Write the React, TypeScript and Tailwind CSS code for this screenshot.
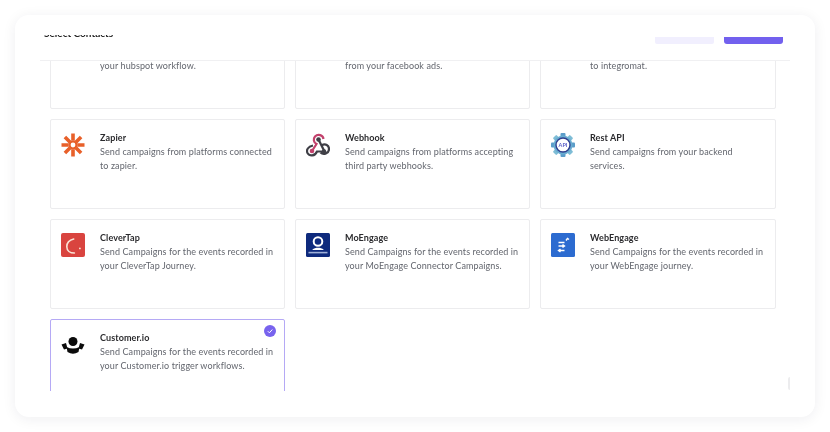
import React from 'react';

const ZapierIcon = () => (
  <svg viewBox="0 0 24 24" className="w-6 h-6" fill="none">
    <g stroke="#e8602a" strokeWidth="3.6">
      <path d="M12 .5v7M12 16.500v7M.5 12h7M16.500 12h7M3.900 3.900l5 5M15.100 15.100l5 5M20.100 3.900l-5 5M8.900 15.100l-5 5" />
    </g>
    <circle cx="12" cy="12" r="3.600" stroke="#e8602a" strokeWidth="2.400" />
  </svg>
);

const WebhookIcon = () => (
  <svg viewBox="0 0 24 24" className="w-6 h-6" fill="none" strokeWidth="2.200">
    <path d="M12.500 6.500l5.500 11" stroke="#3f3f46" />
    <path d="M6 18l4.500-7C7.500 9.500 7 6 9 3.500c3-3 8-1.500 8.500 2.500" stroke="#c2416c" />
    <path d="M7 12.500C2 13.500 0 17 1.500 20c2 3.500 7.500 3.500 9.500-1.500h7" stroke="#3f3f46" />
    <path d="M15.500 12.500c4-2.500 7.500 0 7.500 3.500 0 4.500-5.500 6.500-8.500 3.500" stroke="#3f3f46" />
    <circle cx="12.500" cy="6.500" r="2.300" fill="#3f3f46" />
    <circle cx="6" cy="18" r="2.300" fill="#c2416c" />
    <circle cx="18" cy="18.500" r="2.300" fill="#3f3f46" />
  </svg>
);

const RestApiIcon = () => (
  <svg viewBox="0 0 24 24" className="w-6 h-6">
    <g fill="#5b9dc9">
      <rect x="9.500" y="0" width="5" height="24" rx="1" />
      <rect x="0" y="9.500" width="24" height="5" rx="1" />
      <rect x="9.500" y="0" width="5" height="24" rx="1" transform="rotate(45 12 12)" fill="#7fbdd6" />
      <rect x="9.500" y="0" width="5" height="24" rx="1" transform="rotate(-45 12 12)" fill="#7fbdd6" />
    </g>
    <circle cx="12" cy="12" r="9.500" fill="#6aaed2" />
    <circle cx="12" cy="12" r="7" fill="#fff" stroke="#2f3f8f" strokeWidth="1.400" />
    <text x="12" y="14" textAnchor="middle" fontSize="5.500" fontWeight="700" fill="#5b5fc7" fontFamily="Lato, sans-serif">API</text>
  </svg>
);

const CleverTapIcon = () => (
  <svg viewBox="0 0 24 24" className="w-6 h-6">
    <rect width="24" height="24" rx="2" fill="#d9443f" />
    <path d="M12.700 6C8 7 5.800 10 5.800 13.700c0 3.800 3.200 6.300 7.600 6.300" fill="none" stroke="#fbe3d6" strokeWidth="1.600" strokeLinecap="round" />
    <circle cx="18.900" cy="15.400" r="0.900" fill="#fbe3d6" />
  </svg>
);

const MoEngageIcon = () => (
  <svg viewBox="0 0 24 24" className="w-6 h-6">
    <rect width="24" height="24" rx="1.500" fill="#0e2a7d" />
    <path d="M6.500 16.500c2.500-2.200 8.500-2.200 11 0v.5h-11z" fill="#fff" />
    <circle cx="12" cy="8.500" r="4.300" fill="#0e2a7d" stroke="#fff" strokeWidth="2" />
    <rect x="2.500" y="18.800" width="19" height="1.600" fill="#9fb0d8" />
  </svg>
);

const WebEngageIcon = () => (
  <svg viewBox="0 0 24 24" className="w-6 h-6">
    <rect width="24" height="24" rx="1.500" fill="#2c6bd0" />
    <g stroke="#fff" strokeWidth="1.400" fill="none">
      <path d="M7.500 9.500h6M15 7.500l1.500-2 1.500 1" />
      <path d="M7.500 13h6M11.500 11.500l2 1.500-2 1.500" />
      <path d="M7.500 17.500h6M9.500 16l-2 1.500 2 1.500" />
    </g>
  </svg>
);

const CustomerIoIcon = () => (
  <svg viewBox="0 0 24 24" className="w-6 h-6" fill="#0b0b0b">
    <circle cx="12" cy="8.500" r="4.500" />
    <path d="M5.500 14Q12 17 18.500 14L17.500 19Q12 22.500 6.500 19z" />
    <path d="M.5 11.500l4.500-1.500 1.500 5.500-3.500 1z" />
    <path d="M23.500 11.500l-4.500-1.500-1.500 5.500 3.500 1z" />
  </svg>
);

const cards = [
  { name: 'Hubspot', lines: ['Send campaigns from actions in', 'your hubspot workflow.'] },
  { name: 'Facebook', lines: ['Send campaigns from leads', 'from your facebook ads.'] },
  { name: 'Integromat', lines: ['Send campaigns from platforms connected', 'to integromat.'] },
  { name: 'Zapier', icon: <ZapierIcon />, lines: ['Send campaigns from platforms connected', 'to zapier.'] },
  { name: 'Webhook', icon: <WebhookIcon />, lines: ['Send campaigns from platforms accepting', 'third party webhooks.'] },
  { name: 'Rest API', icon: <RestApiIcon />, lines: ['Send campaigns from your backend', 'services.'] },
  { name: 'CleverTap', icon: <CleverTapIcon />, lines: ['Send Campaigns for the events recorded in', 'your CleverTap Journey.'] },
  { name: 'MoEngage', icon: <MoEngageIcon />, lines: ['Send Campaigns for the events recorded in', 'your MoEngage Connector Campaigns.'] },
  { name: 'WebEngage', icon: <WebEngageIcon />, lines: ['Send Campaigns for the events recorded in', 'your WebEngage journey.'] },
  { name: 'Customer.io', icon: <CustomerIoIcon />, selected: true, lines: ['Send Campaigns for the events recorded in', 'your Customer.io trigger workflows.'] },
];

export default function App() {
  return (
    <div className="w-[830px] h-[432px] bg-white p-[15px] font-['Lato',sans-serif] overflow-hidden blur-[0.3px]">
      <div className="relative w-[800px] h-[402px] pt-[20px] bg-white rounded-[14px] shadow-[0_2px_14px_rgba(30,30,60,0.07)]">
        {/* Header, cut off at the top */}
        <div className="mx-[25px] h-[26px] border-b border-[#f0f0f2] pl-[4px] pr-[7px] flex justify-between overflow-hidden">
          <h2 className="-mt-[6px] text-[10px] leading-[9px] h-[9px] font-bold text-[#222]">Select Contacts</h2>
          <div className="flex gap-[10px] mt-[2px] h-[7px]">
            <div className="w-[59px] rounded-b-[2px] bg-[#f1effe]" />
            <div className="w-[59px] rounded-b-[3px] bg-[#7260ee]" />
          </div>
        </div>

        {/* Scrolled list */}
        <div className="h-[330px] overflow-hidden pl-[35px]">
          <div className="-mt-[42px] grid grid-cols-[235px_235px_236px] gap-[10px]">
            {cards.map((card) => (
              <div
                key={card.name}
                className={`relative h-[90px] bg-white border rounded-[2px] pl-[10px] pt-[11px] flex gap-[15px] ${
                  card.selected ? 'border-[#b5a9f5]' : 'border-[#ececee]'
                }`}
              >
                <div className="w-6 h-6 mt-[2px] shrink-0">{card.icon}</div>
                <div className="tracking-[0.1px] text-[9px] leading-[14px]">
                  <h3 className="font-bold text-[#2b2b2e]">{card.name}</h3>
                  {card.lines.map((line) => (
                    <p key={line} className="text-[#63666e] whitespace-nowrap">{line}</p>
                  ))}
                </div>
                {card.selected && (
                  <div className="absolute top-[5px] right-[8px] w-3 h-3 rounded-full bg-[#7863ee] flex items-center justify-center">
                    <svg viewBox="0 0 12 12" className="w-3 h-3" fill="none" stroke="#fff" strokeWidth="1">
                      <path d="M3.800 6.200l1.600 1.600 2.900-3.300" />
                    </svg>
                  </div>
                )}
              </div>
            ))}
          </div>
        </div>

        {/* Faint scrollbar end */}
        <div className="absolute right-[25px] top-[362px] w-[2px] h-[13px] bg-[#ececee] rounded-l-[2px]" />
      </div>
    </div>
  );
}
